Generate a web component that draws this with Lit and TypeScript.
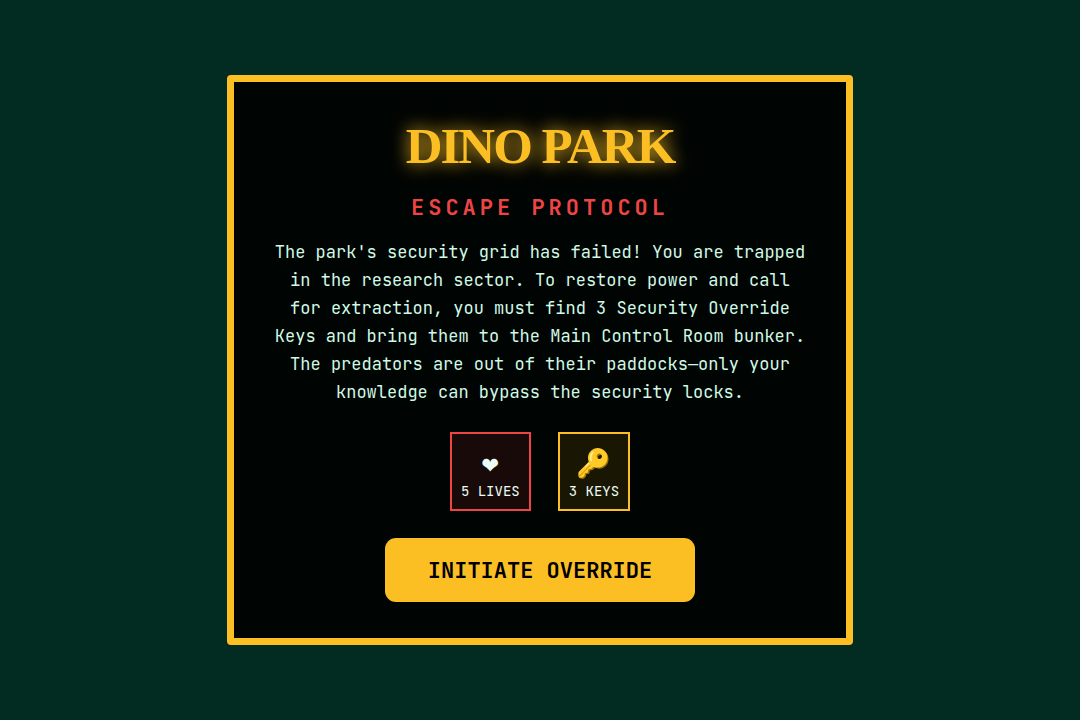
import { LitElement, html, css } from "lit";
import { customElement } from "lit/decorators.js";

@customElement("app-root")
export class AppRoot extends LitElement {
  static styles = css`
    :host {
      display: flex;
      align-items: center;
      justify-content: center;
      box-sizing: border-box;
      min-height: 100vh;
      padding: 16px;
      background: #022c22;
      color: #ecfdf5;
      font-family: "JetBrains Mono", "Roboto Mono", "Liberation Mono", monospace;
    }
    .panel {
      box-sizing: border-box;
      width: 100%;
      max-width: 626px;
      padding: 36px;
      border: 7px solid #fbbf24;
      border-radius: 4px;
      background: #000403;
      text-align: center;
    }
    .title {
      margin: 0;
      color: #fbbf24;
      font: 700 51px/56px "Liberation Serif", serif;
      letter-spacing: -2px;
      text-shadow: 0 0 18px #fbbf24;
    }
    .subtitle {
      margin: 19px 0 15px;
      color: #ef4444;
      font-size: 22px;
      font-weight: 700;
      line-height: 30px;
      letter-spacing: 4px;
    }
    .story {
      margin: 0 0 26px;
      color: #d1fae5;
      font-size: 17px;
      line-height: 28px;
    }
    .stats {
      display: flex;
      justify-content: center;
      gap: 27px;
      margin-bottom: 27px;
    }
    .stat {
      display: flex;
      flex-direction: column;
      align-items: center;
      padding: 9px;
      border: 2px solid #fbbf24;
      background: #1a1604;
    }
    .lives {
      border-color: #ef4444;
      background: #190a0a;
    }
    .icon {
      font-size: 28px;
      line-height: 40px;
    }
    .label {
      font-size: 14px;
      line-height: 17px;
    }
    .start {
      padding: 18px 43px 16px;
      border: 0;
      border-radius: 11px;
      background: #fbbf24;
      color: #000;
      font: inherit;
      font-size: 22px;
      font-weight: 700;
      line-height: 30px;
      cursor: pointer;
    }
  `;

  render() {
    return html`
      <main class="panel">
        <h1 class="title">DINO PARK</h1>
        <h2 class="subtitle">ESCAPE PROTOCOL</h2>
        <p class="story">
          The park's security grid has failed! You are trapped in the research
          sector. To restore power and call for extraction, you must find 3
          Security Override Keys and bring them to the Main Control Room bunker.
          The predators are out of their paddocks—only your knowledge can bypass
          the security locks.
        </p>
        <div class="stats">
          <div class="stat lives">
            <span class="icon">❤</span>
            <span class="label">5 LIVES</span>
          </div>
          <div class="stat">
            <span class="icon">🔑</span>
            <span class="label">3 KEYS</span>
          </div>
        </div>
        <button class="start" type="button">INITIATE OVERRIDE</button>
      </main>
    `;
  }
}
